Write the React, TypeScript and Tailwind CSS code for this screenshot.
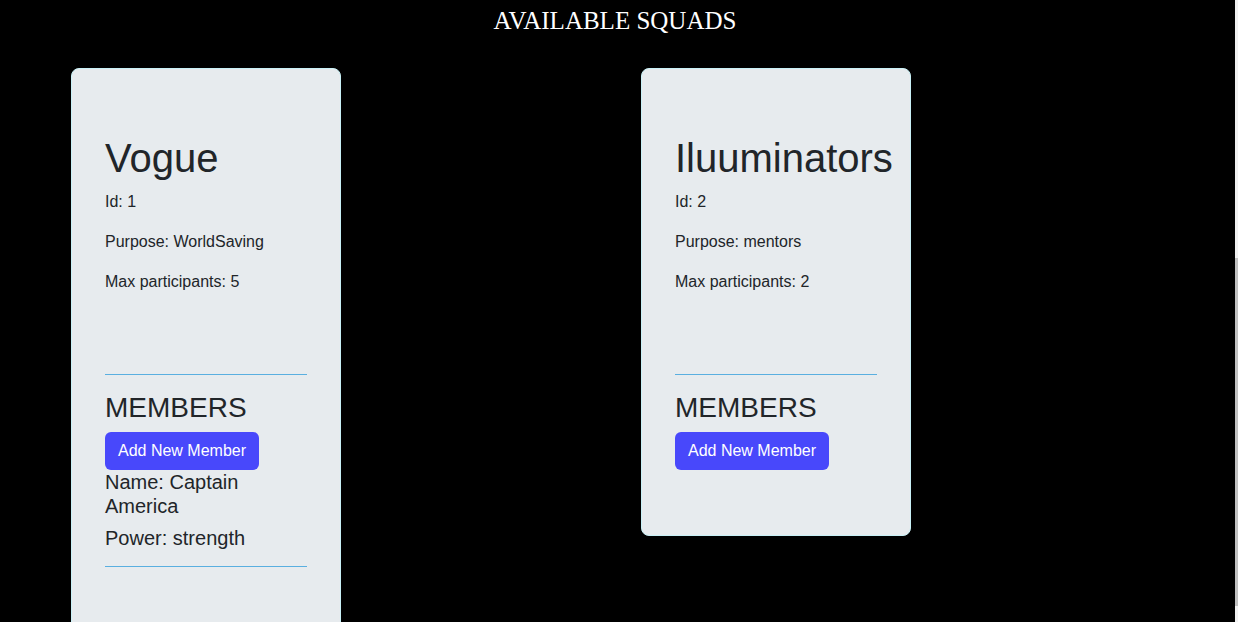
import React from 'react';

type Member = { name: string; power: string };
type Squad = { id: number; name: string; purpose: string; max: number; members: Member[] };

const squads: Squad[] = [
  { id: 1, name: 'Vogue', purpose: 'WorldSaving', max: 5, members: [{ name: 'Captain America', power: 'strength' }] },
  { id: 2, name: 'Iluuminators', purpose: 'mentors', max: 2, members: [] },
];

const Rule = ({ className }: { className: string }) => (
  <div className={`h-px w-full bg-[#5aafe0] ${className}`} />
);

const SquadCard = ({ squad }: { squad: Squad }) => {
  return (
    <div className="w-[270px] shrink-0 self-start rounded-lg border border-[#c9f1f7] bg-[#e7ebee] px-[33px] pt-[65px] pb-[65px] text-[#212529]">
      <h1 className="mb-2 whitespace-nowrap text-[40px] leading-[48px]">{squad.name}</h1>
      <p className="mb-4 text-base leading-6">Id: {squad.id}</p>
      <p className="mb-4 text-base leading-6">Purpose: {squad.purpose}</p>
      <p className="text-base leading-6">Max participants: {squad.max}</p>
      <Rule className="mt-[80px] mb-4" />
      <h3 className="mb-2 text-[28px] leading-[33px]">MEMBERS</h3>
      <button className="h-[38px] rounded-md bg-[#4848fb] px-[13px] text-base leading-6 text-white">
        Add New Member
      </button>
      {squad.members.map((m) => (
        <div key={m.name}>
          <h5 className="mb-2 text-[20px] leading-[24px]">Name: {m.name}</h5>
          <h5 className="text-[20px] leading-[24px]">Power: {m.power}</h5>
          <Rule className="mt-4" />
        </div>
      ))}
    </div>
  );
};

export default function App() {
  return (
    <div
      className="relative h-[622px] w-full overflow-hidden bg-black"
      style={{ fontFamily: '"Liberation Sans", Arial, sans-serif' }}
    >
      <div className="w-[1235px]">
        <h2
          className="w-[1230px] pt-[6px] text-center text-[25px] leading-[29px] text-white"
          style={{ fontFamily: '"Liberation Serif", "Times New Roman", serif' }}
        >
          AVAILABLE SQUADS
        </h2>
        <div className="mt-[33px] flex gap-[300px] pl-[71px]">
          {squads.map((s) => (
            <SquadCard key={s.id} squad={s} />
          ))}
        </div>
      </div>
      {/* scrollbar edge */}
      <div className="absolute top-0 right-0 flex h-full w-[3px] flex-col bg-[#f1f1f1]">
        <div className="mt-[258px] h-[348px] w-full bg-[#c1c1c1]" />
      </div>
    </div>
  );
}
